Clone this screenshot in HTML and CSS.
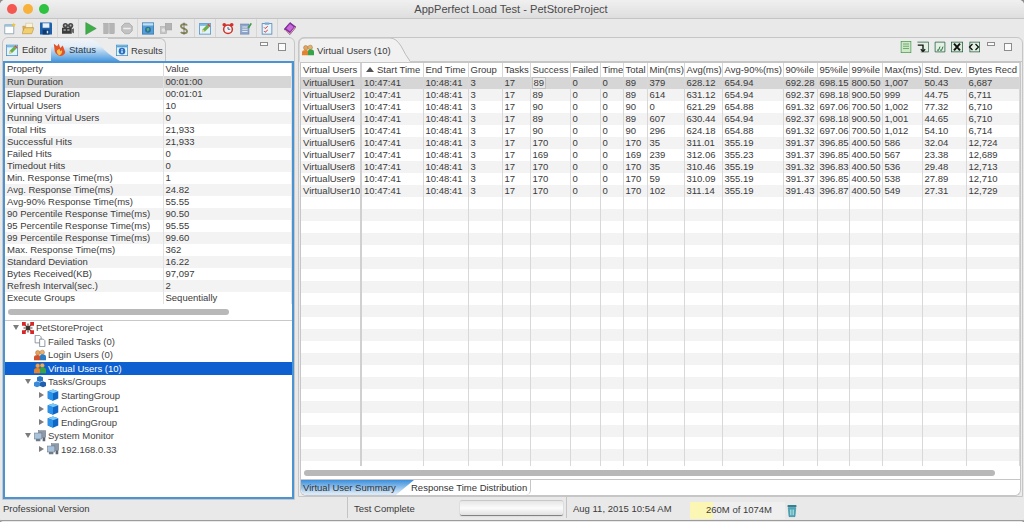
FILE: index.html
```html
<!DOCTYPE html>
<html lang="en">
<head>
    <meta charset="UTF-8">
    <title>AppPerfect Load Test - PetStoreProject</title>
    <link rel="stylesheet" href="styles.css">
</head>
<body>
    <svg class="defs" width="0" height="0">
        <symbol id="i-edit" viewBox="0 0 16 16">
            <rect x="0.5" y="1.500" width="15" height="14" fill="#e4f2fb" stroke="#3f8fc4"/>
            <rect x="1" y="2" width="14" height="2.500" fill="#7db9e0"/>
            <path d="M4 13l1-4 6-6 3 3-6 6z" fill="#69b04a"/>
            <path d="M4 13l1-4 3 3z" fill="#f2d6a0"/>
            <path d="M11 3l3 3 1.500-1.500-3-3z" fill="#d9483b"/>
        </symbol>
        <symbol id="i-info" viewBox="0 0 16 16">
            <rect x="0.5" y="1.500" width="15" height="14" fill="#e4f2fb" stroke="#3f8fc4"/>
            <rect x="1" y="2" width="14" height="2.500" fill="#5aa5d8"/>
            <circle cx="8" cy="9.500" r="4.400" fill="#2a6fc0"/>
            <rect x="7.200" y="8.600" width="1.600" height="3.500" fill="#fff"/>
            <rect x="7.200" y="6.600" width="1.600" height="1.300" fill="#fff"/>
        </symbol>
        <symbol id="i-users" viewBox="0 0 16 16">
            <circle cx="5" cy="5" r="3" fill="#e6a35c" stroke="#8a5a24" stroke-width=".5"/>
            <circle cx="11" cy="4.500" r="3" fill="#e6b06c" stroke="#8a5a24" stroke-width=".5"/>
            <path d="M0 15v-4c0-2 2-3 5-3s3 1 3 3v4z" fill="#d0532e"/>
            <path d="M8 15v-5c0-2 1-3 3-3s5 1 5 3v5z" fill="#2f7cc0"/>
        </symbol>
        <symbol id="i-vusers" viewBox="0 0 16 16">
            <circle cx="5" cy="5" r="3" fill="#e6a35c" stroke="#8a5a24" stroke-width=".5"/>
            <circle cx="11" cy="4.500" r="3" fill="#e6b06c" stroke="#8a5a24" stroke-width=".5"/>
            <path d="M0 15v-4c0-2 2-3 5-3s3 1 3 3v4z" fill="#e0842e"/>
            <path d="M8 15v-5c0-2 1-3 3-3s5 1 5 3v5z" fill="#3aa34a"/>
        </symbol>
        <symbol id="i-cube" viewBox="0 0 16 16">
            <path d="M8 .5l7 2.500v9.500l-7 3-7-3V3z" fill="#0f66c4"/>
            <path d="M8 .5l7 2.500-7 2.500-7-2.500z" fill="#7cc8f6"/>
            <path d="M1 3l7 2.500v10l-7-3z" fill="#2a92e8"/>
        </symbol>
        <symbol id="i-cubes" viewBox="0 0 16 16">
            <path d="M8 0l4 1.700v4.600l-4 1.700-4-1.700V1.700z" fill="#2a78c8"/>
            <path d="M4 7l4 1.700v4.600L4 15l-4-1.700V8.700z" fill="#3a8ad8"/>
            <path d="M12 7l4 1.700v4.600L12 15l-4-1.700V8.700z" fill="#1f5fb0"/>
        </symbol>
        <symbol id="i-monitor" viewBox="0 0 16 16">
            <rect x="6" y="1" width="9.500" height="9" fill="#8e9aa8" stroke="#5c6672" stroke-width=".6"/>
            <rect x="0.5" y="4" width="10" height="8" fill="#a9c3dc" stroke="#5c6672" stroke-width=".6"/>
            <rect x="2.500" y="12" width="6" height="3" fill="#6f7b88"/>
            <rect x="11.500" y="10" width="3.500" height="5" fill="#5c6672"/>
        </symbol>
    </svg>

    <div class="window">
        <header class="titlebar">
            <div class="lights">
                <span class="light red"></span>
                <span class="light amber"></span>
                <span class="light green"></span>
            </div>
            <div class="title">AppPerfect Load Test - PetStoreProject</div>
        </header>

        <div class="toolbar">
            <div class="tool-group tg-first">
                <svg class="tool" viewBox="0 0 16 16"><path d="M1 3h12v12H1z" fill="#fff" stroke="#7a94a8"/><path d="M1 3h12v2.500H1z" fill="#9cc3de"/><path d="M13 0l.8 2 2 .3-1.500 1.400.4 2-1.700-1-1.700 1 .4-2-1.500-1.400 2-.3z" fill="#f3c430"/></svg>
                <svg class="tool" viewBox="0 0 16 16"><path d="M1 5h5l1 1h7l-2 8H2z" fill="#e9bc55" stroke="#a8792a" stroke-width=".6"/><path d="M5 1h9v6H5z" fill="#fbf3d8" stroke="#b9a56d" stroke-width=".5"/><path d="M0 15l3-8h13l-3 8z" fill="#f2cf70" stroke="#a8792a" stroke-width=".6"/></svg>
                <svg class="tool" viewBox="0 0 16 16"><path d="M0 0h15l1 1v15H0z" fill="#1d5fa8"/><rect x="3.500" y="1" width="9" height="6" fill="#e8f0f8"/><rect x="3.500" y="9.500" width="9" height="6.500" fill="#0e3a70"/><rect x="9" y="11" width="2" height="3.500" fill="#cfe0f0"/></svg>
            </div>
            <div class="tool-group">
                <svg class="tool" viewBox="0 0 16 16"><circle cx="4.500" cy="4" r="3.500" fill="#4c4c4c"/><circle cx="11.500" cy="4" r="3.500" fill="#4c4c4c"/><circle cx="4.500" cy="4" r="1.200" fill="#bbb"/><circle cx="11.500" cy="4" r="1.200" fill="#bbb"/><rect x="0" y="7" width="13" height="8" fill="#3c3c3c"/><path d="M13 9l3-1.500v7L13 13z" fill="#6a6a6a"/><rect x="2" y="9" width="3" height="2" fill="#aaa"/><rect x="7" y="9" width="3" height="2" fill="#aaa"/></svg>
            </div>
            <div class="tool-group tg-wide">
                <svg class="tool" viewBox="0 0 16 16"><path d="M1 0l14 8-14 8z" fill="#3fae49" stroke="#2a8434" stroke-width=".6"/></svg>
                <svg class="tool" viewBox="0 0 16 16"><rect x="1" y="1" width="6" height="14" fill="#b5b5b5" stroke="#999" stroke-width=".5"/><rect x="9" y="1" width="6" height="14" fill="#b5b5b5" stroke="#999" stroke-width=".5"/></svg>
                <svg class="tool" viewBox="0 0 16 16"><path d="M5 1h6l4 4v6l-4 4H5l-4-4V5z" fill="#c2c2c2" stroke="#a4a4a4"/><rect x="3" y="7" width="10" height="2" fill="#eee"/></svg>
            </div>
            <div class="tool-group">
                <svg class="tool" viewBox="0 0 16 16"><rect x=".5" y=".5" width="15" height="15" fill="#5a9fd4" stroke="#2f74ad"/><rect x="1" y="1" width="14" height="3" fill="#bfe0f6"/><circle cx="8" cy="9.500" r="4" fill="#2a6fa8"/><path d="M6 8l3-1 1 3-3 2z" fill="#59b56a"/></svg>
                <svg class="tool" viewBox="0 0 16 16"><rect x="0" y="5" width="9" height="10" fill="#c4c4c4" stroke="#aaa" stroke-width=".6"/><rect x="7" y="1" width="9" height="9" fill="#b4b4b4" stroke="#9c9c9c" stroke-width=".6"/><circle cx="4.500" cy="10" r="2.500" fill="#e2e2e2"/></svg>
                <svg class="tool" viewBox="0 0 16 16"><path d="M12 4C11 1.500 4 1.500 4 5s8 3 8 6.500S5 15 4 12.500" fill="none" stroke="#8b8b5a" stroke-width="2.600"/><path d="M8 0v16" stroke="#555"/></svg>
            </div>
            <div class="tool-group">
                <svg class="tool"><use href="#i-edit"/></svg>
            </div>
            <div class="tool-group tg-wide">
                <svg class="tool" viewBox="0 0 16 16"><circle cx="8" cy="9" r="5.800" fill="#f4f4f4" stroke="#d2302a" stroke-width="2"/><circle cx="3" cy="3" r="2.400" fill="#d2302a"/><circle cx="13" cy="3" r="2.400" fill="#d2302a"/><path d="M8 6v3h3" fill="none" stroke="#2a5c8c" stroke-width="1.200"/></svg>
                <svg class="tool" viewBox="0 0 16 16"><rect x="1" y="2" width="11" height="13.500" fill="#8fa6cc" stroke="#4f6a9c" stroke-width=".6"/><path d="M3 6h7M3 9h7M3 12h7" stroke="#fff"/><path d="M10 7l4-6.500 2 1-4 6.500z" fill="#3a9c48"/></svg>
            </div>
            <div class="tool-group">
                <svg class="tool" viewBox="0 0 16 16"><rect x="1.500" y="1.500" width="13" height="14" fill="#eaf2fa" stroke="#3f7fb8"/><rect x="5" y="0" width="6" height="3" fill="#7aa8d0"/><path d="M4 6.500l1.500 1.500L9 5M4 11.500L5.500 13 9 10" fill="none" stroke="#d2302a" stroke-width="1.300"/></svg>
            </div>
            <div class="tool-group tg-wide">
                <svg class="tool" viewBox="0 0 16 16"><path d="M8 0l8 6-8 10-8-7z" fill="#8a2aa8" stroke="#4e1266" stroke-width=".7"/><path d="M3 8l5-6 5 4-5 6z" fill="#c66ad8"/><path d="M1 10l7 5 7-9" fill="none" stroke="#f2e0a0"/></svg>
            </div>
        </div>

        <main class="workspace">
            <section class="panel left-panel">
                <div class="tabstrip">
                    <div class="tab tab-editor"><svg class="ico"><use href="#i-edit"/></svg>Editor</div>
                    <div class="tab tab-active"><svg class="ico ico-flame" viewBox="0 0 16 16"><path d="M1 1l4 3 2-3 2 5 3-3 3 8c0 3-4 5-6 5s-7-3-7-7z" fill="#e4522a"/><path d="M5 9l3-2 1 3 2-1c1 2-1 6-3 6s-4-4-3-6z" fill="#f6c04c"/></svg>Status</div>
                    <div class="tab tab-last"><svg class="ico"><use href="#i-info"/></svg>Results</div>
                    <div class="view-btns"><span class="btn-min"></span><span class="btn-max"></span></div>
                </div>
                <div class="left-body">
                    <div class="prop-wrap">
                        <table class="grid prop-table">
                            <colgroup><col class="c-prop"><col></colgroup>
                            <thead><tr><th>Property</th><th>Value</th></tr></thead>
                            <tbody>
                                <tr class="sel"><td>Run Duration</td><td>00:01:00</td></tr>
                                <tr><td>Elapsed Duration</td><td>00:01:01</td></tr>
                                <tr><td>Virtual Users</td><td>10</td></tr>
                                <tr><td>Running Virtual Users</td><td>0</td></tr>
                                <tr><td>Total Hits</td><td>21,933</td></tr>
                                <tr><td>Successful Hits</td><td>21,933</td></tr>
                                <tr><td>Failed Hits</td><td>0</td></tr>
                                <tr><td>Timedout Hits</td><td>0</td></tr>
                                <tr><td>Min. Response Time(ms)</td><td>1</td></tr>
                                <tr><td>Avg. Response Time(ms)</td><td>24.82</td></tr>
                                <tr><td>Avg-90% Response Time(ms)</td><td>55.55</td></tr>
                                <tr><td>90 Percentile Response Time(ms)</td><td>90.50</td></tr>
                                <tr><td>95 Percentile Response Time(ms)</td><td>95.55</td></tr>
                                <tr><td>99 Percentile Response Time(ms)</td><td>99.60</td></tr>
                                <tr><td>Max. Response Time(ms)</td><td>362</td></tr>
                                <tr><td>Standard Deviation</td><td>16.22</td></tr>
                                <tr><td>Bytes Received(KB)</td><td>97,097</td></tr>
                                <tr><td>Refresh Interval(sec.)</td><td>2</td></tr>
                                <tr><td>Execute Groups</td><td>Sequentially</td></tr>
                            </tbody>
                        </table>
                        <div class="hscroll hscroll-left"><div class="thumb"></div></div>
                    </div>
                    <ul class="tree">
                        <li class="node"><span class="arrow down"></span><svg class="ico" viewBox="0 0 16 16"><path d="M3 3l10 10M13 3L3 13M8 2v12M2 8h12" stroke="#6a3a2a" stroke-width="1.500"/><rect x="0" y="0" width="5" height="5" fill="#d8262a"/><rect x="11" y="0" width="5" height="5" fill="#d8262a"/><rect x="0" y="11" width="5" height="5" fill="#d8262a"/><rect x="11" y="11" width="5" height="5" fill="#d8262a"/><rect x="5.500" y="5.500" width="5" height="5" fill="#333"/></svg>PetStoreProject</li>
                        <li class="node lvl1"><svg class="ico" viewBox="0 0 16 16"><path d="M1.500 .5h6l2 2v8h-8z" fill="#fff" stroke="#6c7a88"/><path d="M7.500 5.500h5l2 2v8h-7z" fill="#fff" stroke="#6c7a88"/></svg>Failed Tasks (0)</li>
                        <li class="node lvl1"><svg class="ico"><use href="#i-users"/></svg>Login Users (0)</li>
                        <li class="node lvl1 node-sel"><svg class="ico"><use href="#i-vusers"/></svg>Virtual Users (10)</li>
                        <li class="node lvl0b"><span class="arrow down"></span><svg class="ico"><use href="#i-cubes"/></svg>Tasks/Groups</li>
                        <li class="node lvl2"><span class="arrow right"></span><svg class="ico"><use href="#i-cube"/></svg>StartingGroup</li>
                        <li class="node lvl2"><span class="arrow right"></span><svg class="ico"><use href="#i-cube"/></svg>ActionGroup1</li>
                        <li class="node lvl2"><span class="arrow right"></span><svg class="ico"><use href="#i-cube"/></svg>EndingGroup</li>
                        <li class="node lvl0b"><span class="arrow down"></span><svg class="ico"><use href="#i-monitor"/></svg>System Monitor</li>
                        <li class="node lvl2"><span class="arrow right"></span><svg class="ico"><use href="#i-monitor"/></svg>192.168.0.33</li>
                    </ul>
                </div>
            </section>

            <section class="panel right-panel">
                <div class="tabstrip right-strip">
                    <div class="tab tab-plain">
                        <svg class="tab-shape" viewBox="0 0 111 24"><path d="M0 24V6Q0 0 6 0H91Q97 0 102 8Q107 18 111 24Z" fill="#f1f1f1"/><path d="M0 24V6Q0 0 6 0H91Q97 0 102 8Q107 18 111 23" fill="none" stroke="#bdbdbd"/></svg>
                        <svg class="ico"><use href="#i-vusers"/></svg>Virtual Users (10)
                    </div>
                    <div class="right-tools">
                        <svg class="ico" viewBox="0 0 16 16"><rect x="1.500" y=".5" width="13" height="15" fill="#cfe8c8" stroke="#4a9a52"/><path d="M4 4h8M4 7h8M4 10h8" stroke="#4a9a52"/></svg>
                        <svg class="ico" viewBox="0 0 16 16"><path d="M.5 1.500h15v13H5" fill="#e4f0e4" stroke="#1f5c3a"/><path d="M1 5.500h7v8" fill="none" stroke="#111" stroke-width="1.800"/><path d="M5 11l3 3 3-3" fill="none" stroke="#111" stroke-width="1.500"/></svg>
                        <svg class="ico" viewBox="0 0 16 16"><path d="M1.500 1.500h13v13h-13z" fill="#e4f0e4" stroke="#1f5c3a"/><path d="M4 12l2 .5 2-5M8 12l2 .5 2-5" fill="none" stroke="#1f6a3a" stroke-width="1.300"/></svg>
                        <svg class="ico" viewBox="0 0 16 16"><rect x=".5" y="1.500" width="15" height="13" fill="#dcecdc" stroke="#1f5c3a"/><path d="M4 3.500l8 9M12 3.500l-8 9" stroke="#111" stroke-width="2.600"/></svg>
                        <svg class="ico" viewBox="0 0 16 16"><rect x="2.500" y="1.500" width="13" height="13" fill="#e4f0e4" stroke="#1f5c3a"/><path d="M6 4L2 8l4 4M10 4l4 4-4 4" fill="none" stroke="#111" stroke-width="1.700"/></svg>
                    </div>
                    <div class="view-btns"><span class="btn-min"></span><span class="btn-max"></span></div>
                </div>
                <div class="right-body">
                    <div class="users-wrap">
                        <table class="grid users-table">
                            <colgroup>
                                <col><col><col><col><col><col><col><col><col>
                                <col><col><col><col><col><col><col><col><col>
                            </colgroup>
                            <thead>
                                <tr><th>Virtual Users</th><th class="sorted"><span class="sort-up"></span>Start Time</th><th>End Time</th><th>Group</th><th>Tasks</th><th>Success</th><th>Failed</th><th>Time</th><th>Total</th><th>Min(ms)</th><th>Avg(ms)</th><th>Avg-90%(ms)</th><th>90%ile</th><th>95%ile</th><th>99%ile</th><th>Max(ms)</th><th>Std. Dev.</th><th>Bytes Recd</th></tr>
                            </thead>
                            <tbody>
                                <tr class="sel"><td>VirtualUser1</td><td>10:47:41</td><td>10:48:41</td><td>3</td><td>17</td><td class="focus"><span>89</span></td><td>0</td><td>0</td><td>89</td><td>379</td><td>628.12</td><td>654.94</td><td>692.28</td><td>698.15</td><td>800.50</td><td>1,007</td><td>50.43</td><td>6,687</td></tr>
                                <tr><td>VirtualUser2</td><td>10:47:41</td><td>10:48:41</td><td>3</td><td>17</td><td>89</td><td>0</td><td>0</td><td>89</td><td>614</td><td>631.12</td><td>654.94</td><td>692.37</td><td>698.18</td><td>900.50</td><td>999</td><td>44.75</td><td>6,711</td></tr>
                                <tr><td>VirtualUser3</td><td>10:47:41</td><td>10:48:41</td><td>3</td><td>17</td><td>90</td><td>0</td><td>0</td><td>90</td><td>0</td><td>621.29</td><td>654.88</td><td>691.32</td><td>697.06</td><td>700.50</td><td>1,002</td><td>77.32</td><td>6,710</td></tr>
                                <tr><td>VirtualUser4</td><td>10:47:41</td><td>10:48:41</td><td>3</td><td>17</td><td>89</td><td>0</td><td>0</td><td>89</td><td>607</td><td>630.44</td><td>654.94</td><td>692.37</td><td>698.18</td><td>900.50</td><td>1,001</td><td>44.65</td><td>6,710</td></tr>
                                <tr><td>VirtualUser5</td><td>10:47:41</td><td>10:48:41</td><td>3</td><td>17</td><td>90</td><td>0</td><td>0</td><td>90</td><td>296</td><td>624.18</td><td>654.88</td><td>691.32</td><td>697.06</td><td>700.50</td><td>1,012</td><td>54.10</td><td>6,714</td></tr>
                                <tr><td>VirtualUser6</td><td>10:47:41</td><td>10:48:41</td><td>3</td><td>17</td><td>170</td><td>0</td><td>0</td><td>170</td><td>35</td><td>311.01</td><td>355.19</td><td>391.37</td><td>396.85</td><td>400.50</td><td>586</td><td>32.04</td><td>12,724</td></tr>
                                <tr><td>VirtualUser7</td><td>10:47:41</td><td>10:48:41</td><td>3</td><td>17</td><td>169</td><td>0</td><td>0</td><td>169</td><td>239</td><td>312.06</td><td>355.23</td><td>391.37</td><td>396.85</td><td>400.50</td><td>567</td><td>23.38</td><td>12,689</td></tr>
                                <tr><td>VirtualUser8</td><td>10:47:41</td><td>10:48:41</td><td>3</td><td>17</td><td>170</td><td>0</td><td>0</td><td>170</td><td>35</td><td>310.46</td><td>355.19</td><td>391.32</td><td>396.83</td><td>400.50</td><td>536</td><td>29.48</td><td>12,713</td></tr>
                                <tr><td>VirtualUser9</td><td>10:47:41</td><td>10:48:41</td><td>3</td><td>17</td><td>170</td><td>0</td><td>0</td><td>170</td><td>59</td><td>310.09</td><td>355.19</td><td>391.37</td><td>396.85</td><td>400.50</td><td>538</td><td>27.89</td><td>12,710</td></tr>
                                <tr><td>VirtualUser10</td><td>10:47:41</td><td>10:48:41</td><td>3</td><td>17</td><td>170</td><td>0</td><td>0</td><td>170</td><td>102</td><td>311.14</td><td>355.19</td><td>391.43</td><td>396.87</td><td>400.50</td><td>549</td><td>27.31</td><td>12,729</td></tr>
                                <tr class="filler"><td></td><td></td><td></td><td></td><td></td><td></td><td></td><td></td><td></td><td></td><td></td><td></td><td></td><td></td><td></td><td></td><td></td><td></td></tr>
                            </tbody>
                        </table>
                        <div class="hscroll hscroll-right"><div class="thumb"></div></div>
                    </div>
                    <div class="bottom-tabs">
                        <div class="btab btab-active">Virtual User Summary</div>
                        <div class="btab btab-second">Response Time Distribution</div>
                    </div>
                </div>
            </section>
        </main>

        <footer class="statusbar">
            <div class="st-version">Professional Version</div>
            <div class="st-msg">Test Complete</div>
            <div class="st-progress"></div>
            <div class="st-date">Aug 11, 2015 10:54 AM</div>
            <div class="st-mem"><div class="st-mem-used"></div><span>260M of 1074M</span></div>
            <svg class="ico st-trash" viewBox="0 0 16 16"><rect x="2" y="0" width="12" height="3" rx="1" fill="#2f8296"/><path d="M3 3.500h10l-1 12H4z" fill="#4aa8b8" stroke="#2c7484" stroke-width=".6"/><path d="M6 6v7.500M8 6v7.500M10 6v7.500" stroke="#d8f0f4" stroke-width=".8"/></svg>
        </footer>
    </div>
</body>
</html>
```

FILE: styles.css
```css
* {
    box-sizing: border-box;
}
html, body {
    margin: 0;
    padding: 0;
    background: #8a8a8a;
}
body {
    width: 1024px;
    height: 522px;
    overflow: hidden;
    font-family: "Liberation Sans", Arial, sans-serif;
    font-size: 9.5px;
    color: #3a3a3a;
}
.defs {
    position: absolute;
}
.window {
    width: 1024px;
    height: 522px;
    display: flex;
    flex-direction: column;
    background: #e9e9e9;
    border-radius: 5px 5px 3px 3px;
    overflow: hidden;
}

/* title bar */
.titlebar {
    height: 19px;
    flex: none;
    display: flex;
    align-items: center;
    padding-left: 7px;
    background: linear-gradient(#f0f0f0, #dedede);
    border-bottom: 1px solid #c4c4c4;
}
.lights {
    display: flex;
    gap: 6px;
    width: 42px;
}
.light {
    width: 10px;
    height: 10px;
    border-radius: 50%;
}
.light.red { background: #f4574f; }
.light.amber { background: #f8b13a; }
.light.green { background: #2dc23f; }
.title {
    flex: 1;
    margin-right: 51px;
    text-align: center;
    font-size: 11.1px;
    color: #4a4a4a;
}

/* toolbar */
.toolbar {
    height: 18px;
    flex: none;
    display: flex;
    align-items: center;
}
.tool-group {
    display: flex;
    align-items: center;
    gap: 6px;
    height: 18px;
    padding: 0 4px;
    border-right: 1px solid #d6d6d6;
}
.tg-first {
    padding-right: 5px;
}
.tg-wide {
    padding-left: 6px;
}
.tool-group:last-child {
    border-right: none;
}
.tool {
    width: 12px;
    height: 13px;
}
.ico {
    width: 12px;
    height: 12px;
    flex: none;
}

/* panels */
.workspace {
    height: 460px;
    flex: none;
    display: flex;
    gap: 3px;
    padding: 0 1px 0 2px;
}
.panel {
    display: flex;
    flex-direction: column;
    border: 1px solid #c6c6c6;
    border-radius: 6px 6px 0 0;
    background: #ececec;
}
.left-panel {
    width: 293px;
    height: 463px;
}
.right-panel {
    flex: 1;
    height: 460px;
}
.tabstrip {
    height: 23px;
    flex: none;
    display: flex;
    align-items: stretch;
}
.tab {
    display: flex;
    align-items: center;
    gap: 3px;
    position: relative;
}
.tab-editor {
    width: 48px;
    padding-left: 3px;
    gap: 4px;
}
.tab-active {
    width: 69px;
    padding-left: 2px;
    z-index: 1;
    background: linear-gradient(#f1f4f7, #e4eef7 35%, #4a9ae0);
    clip-path: path("M0 23V6Q0 1 6 1H38Q44 1 50 8Q56 16 69 23Z");
    color: #2c3a48;
}
.ico-flame {
    width: 13px;
    height: 13px;
}
.tab-last {
    margin-left: -12px;
    padding-left: 8px;
    width: 58px;
    border: 1px solid #c6c6c6;
    border-bottom: none;
    border-left: none;
    border-radius: 0 6px 0 0;
}
.tab-plain {
    width: 111px;
    height: 24px;
    padding-left: 3px;
    z-index: 1;
    isolation: isolate;
}
.tab-shape {
    position: absolute;
    left: 0;
    top: 0;
    width: 111px;
    height: 24px;
    z-index: -1;
}
.view-btns {
    margin-left: auto;
    display: flex;
    align-items: flex-start;
    gap: 10px;
    padding: 5px 8px 0 0;
}
.btn-min {
    width: 8px;
    height: 4px;
    margin-top: -1px;
    border: 1px solid #8c8c8c;
    background: #fbfbfb;
}
.btn-max {
    width: 8px;
    height: 8px;
    border: 1px solid #8c8c8c;
    background: #fbfbfb;
}
.right-tools {
    margin-left: auto;
    display: flex;
    align-items: flex-start;
    gap: 5px;
    padding: 3px 7px 0 0;
}
.right-strip .view-btns {
    margin-left: 0;
    gap: 9px;
    padding-right: 10px;
}

/* left body */
.left-body {
    flex: 1;
    border: 2px solid #4a94d4;
    background: #fff;
    display: flex;
    flex-direction: column;
    min-height: 0;
}
.prop-wrap {
    height: 258px;
    flex: none;
    border-bottom: 1px solid #c8c8c8;
}

/* tables */
.grid {
    width: 100%;
    table-layout: fixed;
    border-collapse: collapse;
}
.grid th {
    height: 13px;
    padding: 0 0 2px 2px;
    font-weight: normal;
    text-align: left;
    white-space: nowrap;
    overflow: hidden;
    background: #fff;
    border-right: 1px solid #dcdcdc;
}
.grid td {
    height: 12px;
    padding: 0 0 0 2px;
    line-height: 12px;
    white-space: nowrap;
    overflow: hidden;
    border-right: 1px solid #e2e2e2;
}
.grid tbody tr:nth-child(even) {
    background: #f3f3f3;
}
.grid tbody tr.sel {
    background: #d6d6d6;
}
.c-prop {
    width: 158px;
}
.hscroll {
    height: 16px;
    display: flex;
    align-items: center;
    padding: 0 3px;
}
.thumb {
    height: 6px;
    border-radius: 3px;
    background: #b8b8b8;
}
.hscroll-left .thumb {
    width: 221px;
}

/* tree */
.tree {
    list-style: none;
    margin: 0;
    padding: 0;
    flex: 1;
}
.node {
    display: flex;
    align-items: center;
    gap: 2px;
    height: 13.5px;
    padding-left: 8px;
    white-space: nowrap;
    color: #444;
}
.lvl1 {
    padding-left: 29px;
}
.lvl0b {
    padding-left: 20px;
}
.lvl2 {
    padding-left: 34px;
}
.node-sel {
    background: #0e5fd0;
    color: #fff;
}
.arrow {
    width: 0;
    height: 0;
    flex: none;
    margin-right: 1px;
}
.arrow.down {
    border-left: 3px solid transparent;
    border-right: 3px solid transparent;
    border-top: 5px solid #7c7c7c;
}
.arrow.right {
    border-top: 3px solid transparent;
    border-bottom: 3px solid transparent;
    border-left: 5px solid #7c7c7c;
}

/* right body */
.right-body {
    flex: 1;
    min-height: 0;
    display: flex;
    flex-direction: column;
    padding: 0 1px;
    border-top: 1px solid #c6c6c6;
}
.users-wrap {
    flex: 1;
    min-height: 0;
    background: #fff;
    overflow: hidden;
    border: 1px solid #c6c6c6;
}
.users-table th {
    height: 14px;
}
.users-table td, .users-table th {
    border-right-color: #d8d8d8;
}
.users-table td:first-child, .users-table th:first-child {
    border-right: 2px solid #d0d0d0;
}
.users-table col:nth-child(1) { width: 60px; }
.users-table col:nth-child(2) { width: 62px; }
.users-table col:nth-child(3) { width: 45px; }
.users-table col:nth-child(4) { width: 34px; }
.users-table col:nth-child(5) { width: 28px; }
.users-table col:nth-child(6) { width: 40px; }
.users-table col:nth-child(7) { width: 30px; }
.users-table col:nth-child(8) { width: 23px; }
.users-table col:nth-child(9) { width: 24px; }
.users-table col:nth-child(10) { width: 37px; }
.users-table col:nth-child(11) { width: 38px; }
.users-table col:nth-child(12) { width: 61px; }
.users-table col:nth-child(13) { width: 34px; }
.users-table col:nth-child(14) { width: 32px; }
.users-table col:nth-child(15) { width: 33px; }
.users-table col:nth-child(16) { width: 40px; }
.users-table col:nth-child(17) { width: 44px; }
.users-table th.sorted {
    padding-left: 4px;
}
.sort-up {
    display: inline-block;
    width: 0;
    height: 0;
    margin-right: 3px;
    vertical-align: 1px;
    border-left: 4px solid transparent;
    border-right: 4px solid transparent;
    border-bottom: 5px solid #555;
}
.focus span {
    display: block;
    width: 14px;
    margin-left: -1px;
    padding-left: 1px;
    border: 1px solid #c0c0c0;
    line-height: 10px;
    background: #e6e6e6;
}
.users-table tbody tr.filler {
    background: repeating-linear-gradient(#fff 0, #fff 12px, #f3f3f3 12px, #f3f3f3 24px);
}
.filler td {
    height: 269px;
}
.hscroll-right {
    height: 13px;
}
.hscroll-right .thumb {
    width: 691px;
}
.bottom-tabs {
    height: 16px;
    flex: none;
    display: flex;
    background: #fff;
    border-radius: 0 0 6px 6px;
    border: 1px solid #c6c6c6;
    border-top: none;
}
.btab {
    line-height: 15px;
    color: #333;
}
.btab-active {
    width: 113px;
    padding-left: 2px;
    background: linear-gradient(#3a8fdc, #d8e8f6 90%);
    border-radius: 0 0 0 6px;
    clip-path: polygon(0 0, 100% 0, 84% 100%, 0 100%);
}
.btab-second {
    margin-left: -3px;
    padding-right: 3px;
    border-right: 1px solid #c6c6c6;
    border-radius: 0 0 5px 0;
}

/* status bar */
.statusbar {
    height: 24px;
    flex: none;
    display: flex;
    align-items: flex-start;
    border-bottom: 1px solid #9c9c9c;
}
.st-version {
    width: 347px;
    padding: 3px 0 0 3px;
    line-height: 18px;
}
.st-msg {
    width: 113px;
    height: 21px;
    padding: 3px 0 0 6px;
    line-height: 18px;
    border-left: 1px solid #c4c4c4;
}
.st-progress {
    width: 103px;
    height: 15px;
    margin-top: 3px;
    border-top: 1px solid #c8c8c8;
    border-radius: 2px;
    background: linear-gradient(#e6e6e6, #fbfbfb 50%, #e2e2e2);
    box-shadow: 0 1px 1px #777;
}
.st-date {
    width: 124px;
    height: 21px;
    margin-left: 3px;
    padding: 3px 0 0 6px;
    line-height: 18px;
    border-left: 1px solid #c4c4c4;
}
.st-mem {
    width: 95px;
    height: 17px;
    margin-top: 5px;
    position: relative;
    padding-left: 16px;
    line-height: 15px;
    background: #efefef;
}
.st-mem span {
    position: relative;
}
.st-mem-used {
    position: absolute;
    left: 0;
    top: 0;
    bottom: 0;
    width: 23px;
    background: #fcf6b4;
}
.st-trash {
    width: 12px;
    height: 14px;
    margin: 7px 0 0 1px;
}
```
